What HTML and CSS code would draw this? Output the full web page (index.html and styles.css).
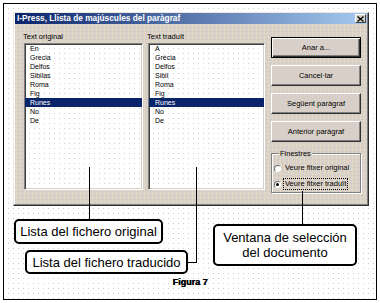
FILE: index.html
```html
<!DOCTYPE html>
<html>
<head>
<meta charset="utf-8">
<link rel="stylesheet" href="styles.css">
</head>
<body>
<div class="frame">
  <div class="dialog">
    <div class="titlebar">
      <span class="title">I-Press, Llista de majúscules del paràgraf</span>
      <span class="close"><svg width="7" height="6" viewBox="0 0 7 6"><path d="M0.5 0.5 L6.5 5.5 M6.5 0.5 L0.5 5.5" stroke="#000" stroke-width="1.3" fill="none"/></svg></span>
    </div>
    <div class="body">
      <div class="col col1">
        <div class="label">Text original</div>
        <ul class="list">
          <li>En</li><li>Grecia</li><li>Delfos</li><li>Sibilas</li><li>Roma</li><li>Fig</li><li class="sel">Runes</li><li>No</li><li>De</li>
        </ul>
      </div>
      <div class="col col2">
        <div class="label">Text traduït</div>
        <ul class="list">
          <li>A</li><li>Grècia</li><li>Delfos</li><li>Sibil</li><li>Roma</li><li>Fig</li><li class="sel">Runes</li><li>No</li><li>De</li>
        </ul>
      </div>
      <div class="side">
        <div class="btn default">Anar a...</div>
        <div class="btn">Cancel·lar</div>
        <div class="btn">Següent paràgraf</div>
        <div class="btn">Anterior paràgraf</div>
        <div class="group">
          <span class="legend">Finestres</span>
          <div class="radio-row"><span class="radio"></span><span class="rlabel">Veure fitxer original</span></div>
          <div class="radio-row"><span class="radio on"></span><span class="rlabel focus">Veure fitxer traduït</span></div>
        </div>
      </div>
    </div>
  </div>

  <div class="notes">
    <div class="notes-left">
      <div class="callout c1">Lista del fichero original</div>
      <div class="callout c2">Lista del fichero traducido</div>
    </div>
    <div class="callout c3"><span>Ventana de selección</span><span>del documento</span></div>
  </div>
  <div class="caption">Figura 7</div>

  <span class="line l1"></span>
  <span class="line l2"></span>
  <span class="line l2h"></span>
  <span class="line l3"></span>
</div>
</body>
</html>
```
FILE: styles.css
```css
* { box-sizing: border-box; margin: 0; padding: 0; }
body { margin: 0; background: #fff; font-family: "Liberation Sans", Arial, sans-serif; color: #000; }

.frame {
  position: relative;
  margin: 3px;
  width: 374px;
  height: 297px;
  border: 1px solid #000;
  background-color: #fff;
  background-image: linear-gradient(to right, #fff 4px, transparent 4px), linear-gradient(to bottom, #fff 4px, #cfcfcf 4px);
  background-size: 5px 5px;
}

.dialog {
  margin: 8px 0 0 9px;
  width: 356px;
  height: 194px;
  background-color: #dad1c9;
  background-image: linear-gradient(to right, transparent 2px, #e2d8c4 2px, #e2d8c4 3px, transparent 3px), linear-gradient(to bottom, transparent 2px, #d2ccc8 2px, #d2ccc8 3px, transparent 3px);
  background-size: 4px 4px;
  border: 1px solid;
  border-color: #ece8e0 #303030 #303030 #ece8e0;
  box-shadow: inset -1px -1px #808080, inset 1px 1px #fff;
  display: flex;
  flex-direction: column;
}

.titlebar {
  margin: 0 1px;
  height: 11px;
  background: linear-gradient(to right, #0a246a, #a6caf0);
  display: flex;
  align-items: center;
  justify-content: space-between;
  padding: 0 1px 0 2px;
}
.title { color: #fff; font-weight: bold; font-size: 8.3px; line-height: 11px; white-space: nowrap; }
.close {
  width: 11px; height: 9px;
  background: #d4d0c8;
  border: 1px solid; border-color: #fff #404040 #404040 #fff;
  display: flex; align-items: center; justify-content: center;
}

.body { display: flex; padding: 7px 0 0 10px; }
.col1 { width: 119px; }
.col2 { width: 117px; margin-left: 5px; }
.label { font-size: 7.5px; line-height: 12px; height: 12px; margin-left: -1px; }
.list {
  list-style: none;
  height: 147px;
  border: 1px solid; border-color: #808080 #fff #fff #808080;
  box-shadow: inset 1px 1px #404040, inset -1px -1px #d4d0c8;
  background-color: #fff;
  background-image: linear-gradient(to right, #fff 4px, transparent 4px), linear-gradient(to bottom, #fff 4px, #d4d4d4 4px);
  background-size: 5px 5px;
  padding-top: 0;
}
.list li { font-size: 7px; line-height: 9px; height: 9px; padding-left: 5px; }
.col2 .list li { padding-left: 6px; }
.list li.sel { background: #0a246a; color: #fff; }

.side { margin-left: 6px; width: 90px; padding-top: 6px; display: flex; flex-direction: column; gap: 7px; }
.btn {
  height: 21px;
  background: #d8d0c8;
  border: 1px solid; border-color: #fff #303030 #303030 #fff;
  box-shadow: inset -1px -1px #808080;
  font-size: 7.5px;
  display: flex; align-items: center; justify-content: center;
}
.btn.default {
  border-color: #000;
  box-shadow: inset 1px 1px #fff, inset -1px -1px #303030, inset -2px -2px #808080;
}

.group {
  position: relative;
  margin-top: 4px;
  height: 40px;
  border: 1px solid #808080;
  box-shadow: inset 1px 1px #fff, 1px 1px #fff;
  padding: 8px 0 0 2px;
  display: flex; flex-direction: column; gap: 4px;
}
.legend {
  position: absolute; top: -5px; left: 7px;
  background: #d8d0c8; padding: 0 1px;
  font-size: 7.5px; line-height: 9px;
}
.radio-row { display: flex; align-items: center; height: 12px; }
.radio {
  width: 7px; height: 7px; border-radius: 50%;
  background: #fff;
  border: 1px solid; border-color: #707070 #fff #fff #707070;
  display: flex; align-items: center; justify-content: center;
}
.radio.on::after { content: ""; width: 3px; height: 3px; border-radius: 50%; background: #000; }
.rlabel {
  margin-left: 2px;
  font-size: 7.5px; line-height: 10px;
  padding: 0 1px;
  border: 1px dotted transparent;
}
.rlabel.focus { border-color: #000; }

.notes { display: flex; margin-top: 13px; }
.notes-left { width: 184px; display: flex; flex-direction: column; align-items: flex-start; }
.callout {
  background: #fff;
  border: 2px solid #000;
  border-radius: 5px;
  font-size: 13px;
  display: flex; align-items: center; justify-content: center;
  white-space: nowrap;
}
.c1 { margin-left: 10px; width: 149px; height: 25px; }
.c2 { margin-left: 21px; margin-top: 6px; width: 163px; height: 24px; }
.c3 { margin-left: 25px; margin-top: 5px; width: 144px; height: 42px; flex-direction: column; line-height: 15px; }

.caption {
  text-align: center;
  margin-top: 2px;
  font-size: 9px; font-weight: bold; line-height: 12px;
  text-shadow: 0.5px 0 0 #000;
}

.line { position: absolute; background: #000; }
.l1 { left: 85px; top: 163px; width: 1px; height: 52px; }
.l2 { left: 192px; top: 163px; width: 1px; height: 96px; }
.l2h { left: 184px; top: 258px; width: 9px; height: 1px; }
.l3 { left: 298px; top: 187px; width: 1px; height: 33px; }
```
